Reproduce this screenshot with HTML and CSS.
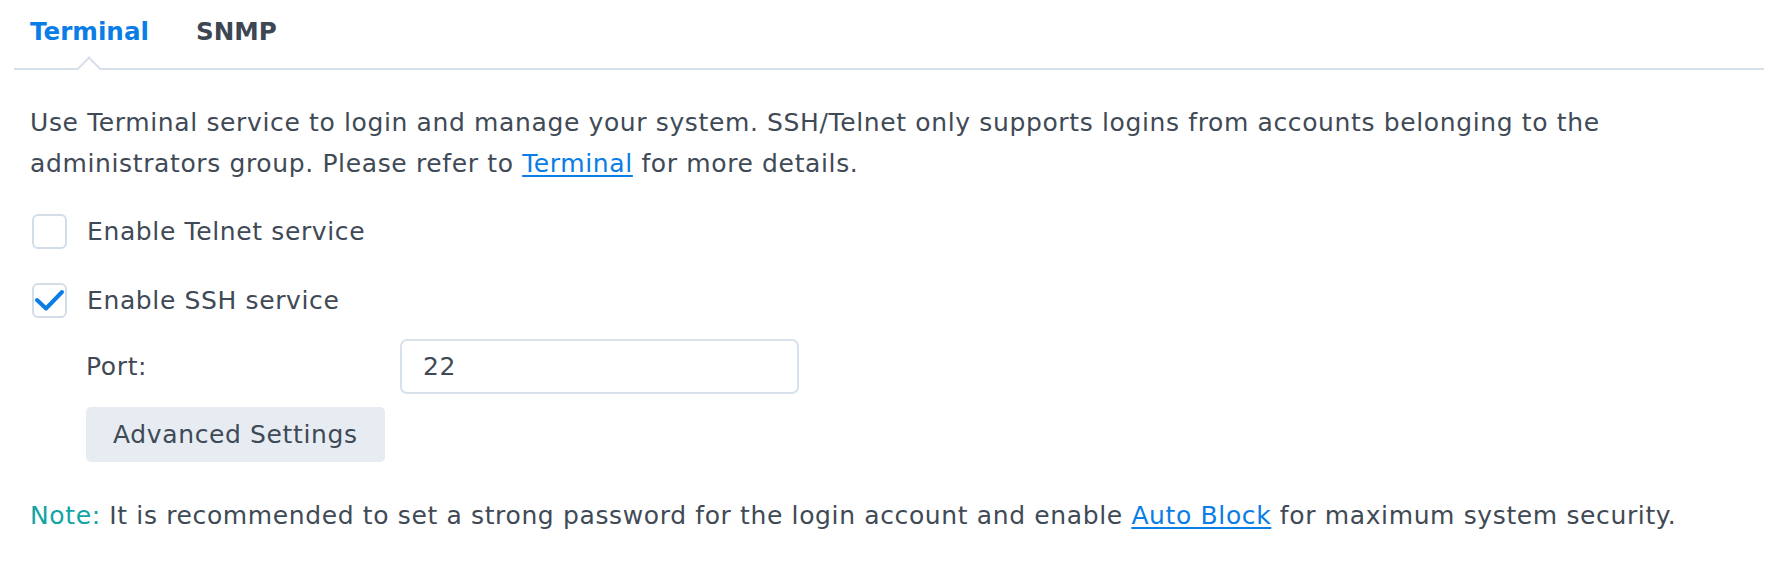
FILE: index.html
```html
<!DOCTYPE html>
<html lang="en">
<head>
<meta charset="utf-8">
<title>Terminal &amp; SNMP</title>
<link rel="stylesheet" href="styles.css">
</head>
<body>
<div class="page">
  <div class="tabs">
    <div class="tab active">Terminal</div>
    <div class="tab">SNMP</div>
  </div>
  <div class="content">
    <p class="desc">Use Terminal service to login and manage your system. SSH/Telnet only supports logins from accounts belonging to the<br>administrators group. Please refer to <a href="#" class="link">Terminal</a> for more details.</p>
    <div class="check-row">
      <span class="checkbox"></span>
      <span class="check-label">Enable Telnet service</span>
    </div>
    <div class="check-row">
      <span class="checkbox checked">
        <svg viewBox="0 0 35 35" class="tick"><path d="M5 17 L14 25.5 L30 9" /></svg>
      </span>
      <span class="check-label">Enable SSH service</span>
    </div>
    <div class="sub">
      <div class="field-row">
        <span class="field-label">Port:</span>
        <div class="input">22</div>
      </div>
      <button class="btn" type="button">Advanced Settings</button>
    </div>
    <p class="note"><span class="note-key">Note:</span> It is recommended to set a strong password for the login account and enable <a href="#" class="link">Auto Block</a> for maximum system security.</p>
  </div>
</div>
</body>
</html>
```
FILE: styles.css
```css
html, body {
  margin: 0;
  padding: 0;
  background: #ffffff;
}
body {
  font-family: "DejaVu Sans", Verdana, sans-serif;
  font-size: 25px;
  letter-spacing: 0.63px;
  color: #3f4a56;
}
.page {
  padding: 0 12px 0 14px;
}
.tabs {
  display: flex;
  gap: 47px;
  padding-left: 16px;
  border-bottom: 2px solid #d6e0ea;
}
.tab {
  position: relative;
  padding: 17px 0 21px;
  line-height: 30px;
  font-size: 24.6px;
  letter-spacing: 0;
  font-weight: bold;
  color: #3d4753;
}
.tab.active {
  color: #0a7de6;
}
.tab.active::after {
  content: "";
  position: absolute;
  left: 50%;
  bottom: -10px;
  width: 18px;
  height: 18px;
  margin-left: -9px;
  box-sizing: border-box;
  background: #ffffff;
  border-top: 2px solid #d6e0ea;
  border-left: 2px solid #d6e0ea;
  transform: rotate(45deg);
}
.content {
  padding: 32px 0 0 16px;
}
.desc {
  margin: 0;
  line-height: 41px;
}
.link {
  color: #0a7de6;
  text-decoration: underline;
  text-underline-offset: 3px;
}
.check-row {
  display: flex;
  align-items: center;
  gap: 20px;
  margin-top: 30px;
  padding-left: 2px;
  line-height: 35px;
}
.check-row + .check-row {
  margin-top: 34px;
}
.checkbox {
  position: relative;
  width: 35px;
  height: 35px;
  box-sizing: border-box;
  border: 2px solid #d3dde8;
  border-radius: 6px;
  background: #ffffff;
  flex: none;
}
.tick {
  position: absolute;
  left: -2px;
  top: -2px;
  width: 35px;
  height: 35px;
}
.tick path {
  fill: none;
  stroke: #0b7ee6;
  stroke-width: 4;
  stroke-linecap: round;
  stroke-linejoin: round;
}
.sub {
  padding-left: 56px;
  margin-top: 21px;
}
.field-row {
  display: flex;
  align-items: center;
}
.field-label {
  width: 314px;
  flex: none;
}
.input {
  width: 399px;
  height: 55px;
  box-sizing: border-box;
  border: 2px solid #d8e1eb;
  border-radius: 7px;
  padding: 0 21px;
  line-height: 51px;
}
.btn {
  display: block;
  margin-top: 13px;
  height: 55px;
  padding: 0 27px;
  border: none;
  border-radius: 5px;
  background: #e7ecf3;
  font-family: inherit;
  font-size: 25px;
  letter-spacing: 0.63px;
  color: #3f4a56;
}
.note {
  margin: 35px 0 0;
  line-height: 38px;
}
.note-key {
  color: #13a4a6;
}
```
